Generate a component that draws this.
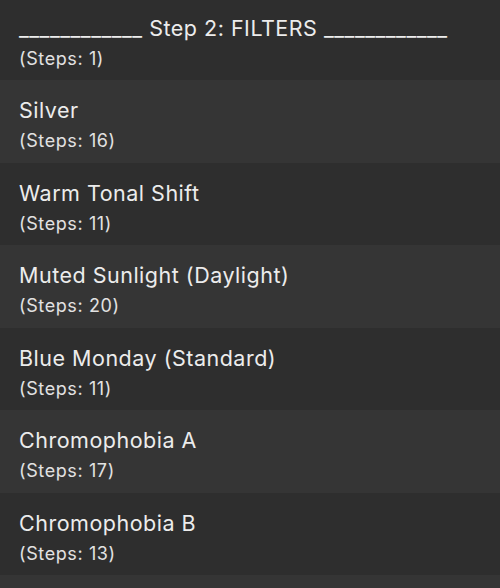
import React from "react";

const rows = [
  { title: "Silver", steps: 16 },
  { title: "Warm Tonal Shift", steps: 11 },
  { title: "Muted Sunlight (Daylight)", steps: 20 },
  { title: "Blue Monday (Standard)", steps: 11 },
  { title: "Chromophobia A", steps: 17 },
  { title: "Chromophobia B", steps: 13 },
];

export default function App() {
  return (
    <div
      className="w-[500px] h-[588px] overflow-hidden bg-[#2e2e2e] text-[#ececec]"
      style={{ fontFamily: "Inter, 'Noto Sans', sans-serif" }}
    >
      <div className="h-[80px] bg-[#2e2e2e] px-[19px] pt-[16px]">
        <div className="text-[21.5px] leading-[24px] tracking-[0.5px] whitespace-nowrap">
          ____________ Step 2: FILTERS ____________
        </div>
        <div className="mt-[9px] text-[18px] leading-[20px] tracking-[0.6px] text-[#e2e2e2]">(Steps: 1)</div>
      </div>
      {rows.map((r, i) => (
        <div
          key={r.title}
          className={
            i % 2 === 0
              ? "h-[82.5px] bg-[#353535] px-[19px] pt-[18px]"
              : "h-[82.5px] bg-[#2e2e2e] px-[19px] pt-[18px]"
          }
        >
          <div className="text-[21.5px] leading-[24px] tracking-[0.5px] whitespace-nowrap">{r.title}</div>
          <div className="mt-[9px] text-[18px] leading-[20px] tracking-[0.6px] text-[#e2e2e2]">
            (Steps: {r.steps})
          </div>
        </div>
      ))}
      <div className="h-[82.5px] bg-[#353535]" />
    </div>
  );
}
